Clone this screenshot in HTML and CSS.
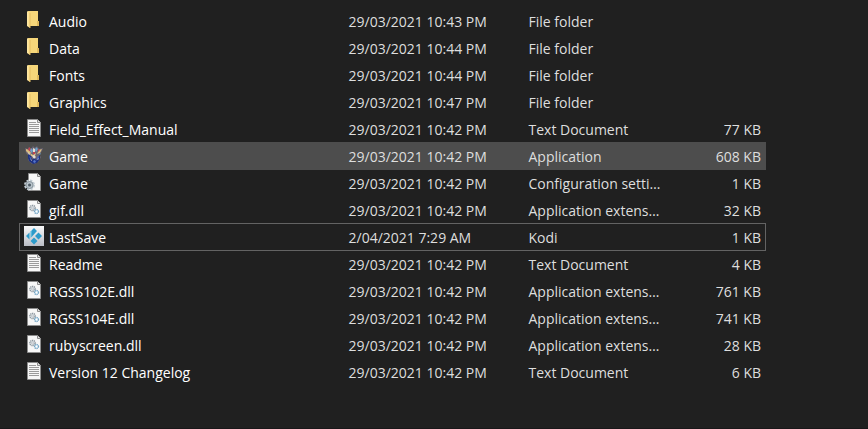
FILE: index.html
```html
<!DOCTYPE html>
<html lang="en">
<head>
    <meta charset="UTF-8">
    <title>Files</title>
    <link rel="stylesheet" href="styles.css">
</head>
<body>
    <!-- icons used by the rows -->
    <svg class="sprite" width="0" height="0">
        <defs>
            <linearGradient id="folderFront" x1="0" y1="0" x2="1" y2="0">
                <stop offset="0" stop-color="#ffe9a6"/>
                <stop offset="1" stop-color="#fbdb83"/>
            </linearGradient>
            <linearGradient id="kodiBack" x1="0" y1="0" x2="0" y2="1">
                <stop offset="0" stop-color="#fafafa"/>
                <stop offset="1" stop-color="#b9bcc4"/>
            </linearGradient>
        </defs>
        <symbol id="folder" viewBox="0 0 20 20">
            <path d="M4 1h10v10h1v5H4z" fill="#f6d67a"/>
            <path d="M14 11h1v5h-2v-5z" fill="#dfb95d"/>
            <path d="M3 1l3 2v15l-3-2z" fill="url(#folderFront)"/>
            <path d="M6 3v15" stroke="#e5bd62" stroke-width="1"/>
        </symbol>
        <symbol id="text" viewBox="0 0 20 20">
            <path d="M3.5 1.5h10l3 3v14h-13z" fill="#f7f7f7" stroke="#8d8d8d"/>
            <path d="M13.5 1.5v3h3" fill="#e4e4e4" stroke="#8d8d8d"/>
            <path d="M5 4.500h7M5 6.500h10M5 8.500h10M5 10.500h10M5 12.500h10M5 14.500h10" stroke="#9b9b9b"/>
        </symbol>
        <symbol id="game" viewBox="0 0 20 20">
            <path d="M1 3l3 1 1-2 2 2 2-3 2 2 2-2 2 3 4-1-1 3-3 4 2 2-2 4-4 3H8l-4-4 1-4-3-3z" fill="#6a6474"/>
            <path d="M4 9l3 2 1 4 2-3 2 3 2-3 2-2v4l-3 4-4 1-4-3-1-3z" fill="#1e3180"/>
            <path d="M2 4l3 1 2 3-2 1-3-3zM18 4l-3 1-2 4 3-1zM6 8l3 2 3-2-1 3H7z" fill="#dbbd80"/>
            <path d="M5 2l2 2v3L4 5zM14 4l2 1-2 2zM9 7h2v2H9z" fill="#c24450"/>
            <path d="M7 3l2 2-1 3-2-2zM12 2l2 2-2 3-1-2zM16 8l1 1-2 1z" fill="#6fa3cb"/>
            <path d="M9 3l2 1v3H9zM8 11l2-1 2 2-2 2zM4 7l2 2-1 1zM6 14l2 1v1zM14 13l1 1-2 1z" fill="#e5ddd0"/>
            <path d="M5 11l2 2v2zM14 11l1 1-3 4zM9 16l2-1 1 2-2 1z" fill="#5577d0"/>
        </symbol>
        <symbol id="config" viewBox="0 0 20 20">
            <path d="M4.500 1.500h9l3 3v14h-12z" fill="#f8f8f8" stroke="#8d8d8d"/>
            <path d="M13.500 1.500v3h3" fill="#ddd" stroke="#8d8d8d"/>
            <circle cx="5.500" cy="13" r="4" fill="#aeb9c2" stroke="#c2ccd3" stroke-width="3" stroke-dasharray="2 1.140"/>
            <circle cx="5.500" cy="13" r="3.500" fill="#b8c3cb" stroke="#8c989f"/>
            <circle cx="5.500" cy="13" r="1.500" fill="#4d5b65"/>
        </symbol>
        <symbol id="dll" viewBox="0 0 20 20">
            <path d="M3.500 1.500h10l3 3v14h-13z" fill="#f7f7f7" stroke="#8d8d8d"/>
            <path d="M13.500 1.500v3h3" fill="#e4e4e4" stroke="#8d8d8d"/>
            <circle cx="8.500" cy="9" r="2.600" fill="#eceff1" stroke="#8d979f" stroke-width="1.500" stroke-dasharray="1.300 .6"/>
            <circle cx="8.500" cy="9" r="1" fill="#fff" stroke="#929ca4" stroke-width=".6"/>
            <circle cx="12.500" cy="12.500" r="2" fill="#e5f2fa" stroke="#75a5c4" stroke-width="1.300" stroke-dasharray="1.200 .5"/>
            <circle cx="12.500" cy="12.500" r=".7" fill="#fff"/>
        </symbol>
        <symbol id="kodi" viewBox="0 0 20 20">
            <path d="M0 0h20v20H0z" fill="url(#kodiBack)"/>
            <path d="M10 2l3 3-5 5.500V4zM14.500 6.500l3.500 3.500-3.500 3.500L11 10zM10 11.500l3.500 3.500-3.500 3.500L6.500 15zM5.500 6.500v7L2 10z" fill="#2d9bca"/>
            <path d="M8 4v6.500L6.500 12V5.500z" fill="#54b5dc"/>
        </symbol>
    </svg>

    <table class="files">
        <colgroup>
            <col>
            <col class="col-date">
            <col class="col-type">
            <col class="col-size">
        </colgroup>
        <tbody>
            <tr>
                <td class="name"><svg class="icon"><use href="#folder"/></svg>Audio</td>
                <td>29/03/2021 10:43 PM</td>
                <td>File folder</td>
                <td class="size"></td>
            </tr>
            <tr>
                <td class="name"><svg class="icon"><use href="#folder"/></svg>Data</td>
                <td>29/03/2021 10:44 PM</td>
                <td>File folder</td>
                <td class="size"></td>
            </tr>
            <tr>
                <td class="name"><svg class="icon"><use href="#folder"/></svg>Fonts</td>
                <td>29/03/2021 10:44 PM</td>
                <td>File folder</td>
                <td class="size"></td>
            </tr>
            <tr>
                <td class="name"><svg class="icon"><use href="#folder"/></svg>Graphics</td>
                <td>29/03/2021 10:47 PM</td>
                <td>File folder</td>
                <td class="size"></td>
            </tr>
            <tr>
                <td class="name"><svg class="icon"><use href="#text"/></svg>Field_Effect_Manual</td>
                <td>29/03/2021 10:42 PM</td>
                <td>Text Document</td>
                <td class="size">77 KB</td>
            </tr>
            <tr class="selected">
                <td class="name"><svg class="icon"><use href="#game"/></svg>Game</td>
                <td>29/03/2021 10:42 PM</td>
                <td>Application</td>
                <td class="size">608 KB</td>
            </tr>
            <tr>
                <td class="name"><svg class="icon"><use href="#config"/></svg>Game</td>
                <td>29/03/2021 10:42 PM</td>
                <td>Configuration settings</td>
                <td class="size">1 KB</td>
            </tr>
            <tr>
                <td class="name"><svg class="icon"><use href="#dll"/></svg>gif.dll</td>
                <td>29/03/2021 10:42 PM</td>
                <td>Application extension</td>
                <td class="size">32 KB</td>
            </tr>
            <tr class="focused">
                <td class="name"><svg class="icon"><use href="#kodi"/></svg>LastSave</td>
                <td>2/04/2021 7:29 AM</td>
                <td>Kodi</td>
                <td class="size">1 KB</td>
            </tr>
            <tr>
                <td class="name"><svg class="icon"><use href="#text"/></svg>Readme</td>
                <td>29/03/2021 10:42 PM</td>
                <td>Text Document</td>
                <td class="size">4 KB</td>
            </tr>
            <tr>
                <td class="name"><svg class="icon"><use href="#dll"/></svg>RGSS102E.dll</td>
                <td>29/03/2021 10:42 PM</td>
                <td>Application extension</td>
                <td class="size">761 KB</td>
            </tr>
            <tr>
                <td class="name"><svg class="icon"><use href="#dll"/></svg>RGSS104E.dll</td>
                <td>29/03/2021 10:42 PM</td>
                <td>Application extension</td>
                <td class="size">741 KB</td>
            </tr>
            <tr>
                <td class="name"><svg class="icon"><use href="#dll"/></svg>rubyscreen.dll</td>
                <td>29/03/2021 10:42 PM</td>
                <td>Application extension</td>
                <td class="size">28 KB</td>
            </tr>
            <tr>
                <td class="name"><svg class="icon"><use href="#text"/></svg>Version 12 Changelog</td>
                <td>29/03/2021 10:42 PM</td>
                <td>Text Document</td>
                <td class="size">6 KB</td>
            </tr>
        </tbody>
    </table>
</body>
</html>
```
FILE: styles.css
```css
body {
    box-sizing: border-box;
    min-height: 100vh;
    margin: 0;
    padding: 7px 102px 0 19px;
    border-bottom: 1px solid #191719;
    background-color: #202020;
    color: #dedede;
    font-family: "Segoe UI", "Open Sans", "Noto Sans", sans-serif;
    font-size: 14px;
    line-height: 24px;
}

.sprite {
    display: block;
}

/* file list */
.files {
    width: 100%;
    table-layout: fixed;
    border-collapse: collapse;
}

.col-date {
    width: 180px;
}

.col-type {
    width: 150px;
}

.col-size {
    width: 94px;
}

/* dotted loses to the solid border of a selected or focused row */
.files tr {
    border: 1px dotted transparent;
}

.files td {
    padding: 2px 10px 0 7px;
    overflow: hidden;
    white-space: nowrap;
    text-overflow: ellipsis;
}

.files .name {
    padding-left: 4px;
    color: #fff;
}

.files .size {
    padding-right: 4px;
    text-align: right;
}

.files .selected {
    border: 1px solid #4d4d4d;
    background-color: #4d4d4d;
}

.files .focused {
    border: 1px solid #636363;
}

.icon {
    width: 20px;
    height: 20px;
    margin-right: 5px;
    vertical-align: top;
}
```
